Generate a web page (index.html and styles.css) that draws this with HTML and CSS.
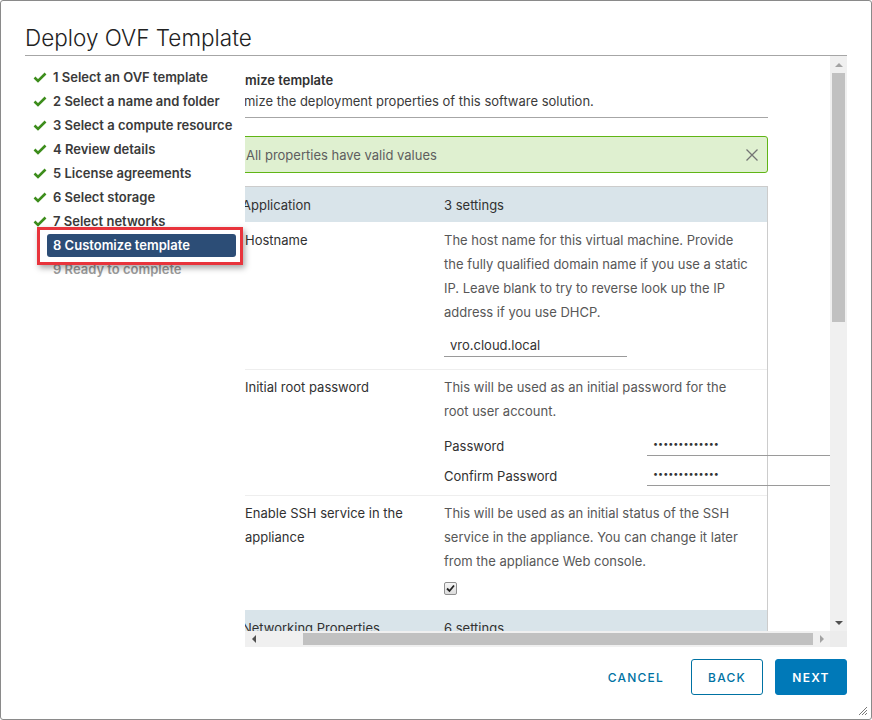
FILE: index.html
```html
<!DOCTYPE html>
<html lang="en">
<head>
    <meta charset="UTF-8">
    <title>Deploy OVF Template</title>
    <link rel="stylesheet" href="styles.css">
</head>
<body>
    <div class="dialog">
        <div class="dialog-header">
            <h1 class="dialog-title">Deploy OVF Template</h1>
        </div>

        <div class="dialog-body">
            <!-- wizard steps -->
            <nav class="steps">
                <div class="step"><svg class="check" viewBox="0 0 14 11"><path d="M1.5 5.5 L5 9 L12.5 1.5"/></svg><span class="step-link">1 Select an OVF template</span></div>
                <div class="step"><svg class="check" viewBox="0 0 14 11"><path d="M1.5 5.5 L5 9 L12.5 1.5"/></svg><span class="step-link">2 Select a name and folder</span></div>
                <div class="step"><svg class="check" viewBox="0 0 14 11"><path d="M1.5 5.5 L5 9 L12.5 1.5"/></svg><span class="step-link">3 Select a compute resource</span></div>
                <div class="step"><svg class="check" viewBox="0 0 14 11"><path d="M1.5 5.5 L5 9 L12.5 1.5"/></svg><span class="step-link">4 Review details</span></div>
                <div class="step"><svg class="check" viewBox="0 0 14 11"><path d="M1.5 5.5 L5 9 L12.5 1.5"/></svg><span class="step-link">5 License agreements</span></div>
                <div class="step"><svg class="check" viewBox="0 0 14 11"><path d="M1.5 5.5 L5 9 L12.5 1.5"/></svg><span class="step-link">6 Select storage</span></div>
                <div class="step"><svg class="check" viewBox="0 0 14 11"><path d="M1.5 5.5 L5 9 L12.5 1.5"/></svg><span class="step-link">7 Select networks</span></div>
                <div class="step current"><span class="step-link">8 Customize template</span></div>
                <div class="step todo"><span class="step-link">9 Ready to complete</span></div>
                <div class="callout"></div>
            </nav>

            <div class="scroller">
                <div class="viewport">
                    <div class="page">
                        <div class="page-head">
                            <div class="page-title">Customize template</div>
                            <div class="page-sub">Customize the deployment properties of this software solution.</div>
                        </div>

                        <div class="alert">
                            <span class="alert-text">All properties have valid values</span>
                            <svg class="alert-close" viewBox="0 0 12 12"><path d="M0.5 0.5 L11.5 11.5 M11.5 0.5 L0.5 11.5"/></svg>
                        </div>

                        <div class="stack">
                            <div class="stack-head">
                                <div class="stack-label">Application</div>
                                <div>3 settings</div>
                            </div>

                            <div class="stack-row">
                                <div class="row-label">Hostname</div>
                                <div class="row-content">
                                    <div class="row-desc">The host name for this virtual machine. Provide the fully qualified domain name if you use a static IP. Leave blank to try to reverse look up the IP address if you use DHCP.</div>
                                    <input class="text-input host-input" type="text" value="vro.cloud.local">
                                </div>
                            </div>

                            <div class="stack-row pw-row">
                                <div class="row-label">Initial root password</div>
                                <div class="row-content">
                                    <div class="row-desc">This will be used as an initial password for the root user account.</div>
                                    <div class="field">
                                        <span class="field-label">Password</span>
                                        <input class="text-input pw-input" type="password" value="vmware123456!">
                                    </div>
                                    <div class="field">
                                        <span class="field-label">Confirm Password</span>
                                        <input class="text-input pw-input" type="password" value="vmware123456!">
                                    </div>
                                </div>
                            </div>

                            <div class="stack-row ssh-row">
                                <div class="row-label">Enable SSH service in the appliance</div>
                                <div class="row-content">
                                    <div class="row-desc">This will be used as an initial status of the SSH service in the appliance. You can change it later from the appliance Web console.</div>
                                    <span class="checkbox"><svg viewBox="0 0 11 11"><path d="M2 5.5 L4.5 8 L9 2.5"/></svg></span>
                                </div>
                            </div>

                            <div class="stack-head">
                                <div class="stack-label">Networking Properties</div>
                                <div>6 settings</div>
                            </div>
                        </div>
                    </div>
                </div>

                <div class="vbar">
                    <div class="sb-btn"><span class="tri tri-up"></span></div>
                    <div class="vthumb"></div>
                    <div class="sb-fill"></div>
                    <div class="sb-btn"><span class="tri tri-down"></span></div>
                </div>
                <div class="hbar">
                    <div class="sb-btn"><span class="tri tri-left"></span></div>
                    <div class="hgap"></div>
                    <div class="hthumb"></div>
                    <div class="sb-btn"><span class="tri tri-right"></span></div>
                </div>
                <div class="corner"></div>
            </div>
        </div>

        <div class="dialog-footer">
            <button class="btn btn-link">Cancel</button>
            <button class="btn btn-outline">Back</button>
            <button class="btn btn-primary">Next</button>
        </div>

        <svg class="grip" viewBox="0 0 10 10"><path d="M9 1 L1 9 M9 4 L4 9 M9 7 L7 9"/></svg>
    </div>
</body>
</html>
```

FILE: styles.css
```css
body {
    margin: 0;
    font-family: Inter, "Noto Sans", sans-serif;
    color: #313131;
    background-color: #fff;
}
.dialog {
    position: relative;
    width: 872px;
    height: 720px;
    box-sizing: border-box;
    border: 1px solid #8a8a8a;
    border-radius: 3px;
    display: flex;
    flex-direction: column;
    overflow: hidden;
    background-color: #fff;
}
.dialog-header {
    margin: 0 24px;
    height: 55px;
    box-sizing: border-box;
    padding-top: 26px;
    border-bottom: 1px solid #a6a6a6;
}
.dialog-title {
    margin: 0;
    font-size: 22.5px;
    font-weight: 300;
    line-height: 22px;
    color: #222;
}
.dialog-body {
    display: flex;
    height: 591px;
    padding-left: 24px;
}

/* steps */
.steps {
    position: relative;
    width: 220px;
    flex-shrink: 0;
    padding-top: 9px;
    box-sizing: border-box;
}
.step {
    display: flex;
    align-items: center;
    height: 24px;
    padding-left: 8px;
    font-size: 13px;
    font-weight: 600;
    color: #3a3a3a;
    white-space: nowrap;
}
.check {
    width: 14px;
    height: 11px;
    fill: none;
    stroke: #3d8d1c;
    stroke-width: 2.6;
}
.step-link {
    padding-left: 6px;
}
.step.current .step-link,
.step.todo .step-link {
    margin-left: 14px;
}
.step.current .step-link {
    width: 189px;
    height: 23px;
    line-height: 23px;
    box-sizing: border-box;
    border-radius: 3px;
    background-color: #2c4d76;
    color: #fff;
}
.step.todo {
    color: #9a9a9a;
}
.callout {
    position: absolute;
    left: 12px;
    top: 171px;
    width: 206px;
    height: 38px;
    box-sizing: border-box;
    border: 3px solid #e8343c;
    box-shadow: 2px 3px 6px rgba(0, 0, 0, 0.35);
}

/* scroll area */
.scroller {
    width: 602px;
    display: grid;
    grid-template-columns: 585px 17px;
    grid-template-rows: 575px 16px;
}
.viewport {
    overflow: hidden;
}
.page {
    margin-left: -47px;
    width: 632px;
    font-size: 13px;
}
.page-head {
    width: 570px;
    box-sizing: border-box;
    padding: 14px 0 6px 10px;
    border-bottom: 1px solid #a6a6a6;
}
.page-title {
    font-weight: 600;
    line-height: 20px;
}
.page-sub {
    margin-top: 1px;
    line-height: 20px;
    color: #3a3a3a;
}
.alert {
    width: 570px;
    height: 37px;
    margin-top: 18px;
    box-sizing: border-box;
    display: flex;
    align-items: center;
    justify-content: space-between;
    padding: 0 9px 0 47px;
    border: 1px solid #60b515;
    border-radius: 3px;
    background-color: #dff0d0;
    color: #5e5e5e;
}
.alert-close {
    width: 12px;
    height: 12px;
    fill: none;
    stroke: #747474;
    stroke-width: 1.3;
}
.stack {
    width: 570px;
    margin-top: 13px;
    box-sizing: border-box;
    border: 1px solid #ccc;
    border-bottom: none;
}
.stack-head {
    display: grid;
    grid-template-columns: 245px 1fr;
    align-items: center;
    height: 35px;
    background-color: #d9e4ea;
    color: #313131;
}
.stack-label {
    padding-left: 43px;
}
.stack-row {
    display: grid;
    grid-template-columns: 245px 1fr;
    padding: 6px 0 12px;
    border-bottom: 1px solid #eee;
    line-height: 24px;
}
.pw-row {
    padding-top: 5px;
    padding-bottom: 9px;
}
.ssh-row {
    padding-top: 5px;
    padding-bottom: 15px;
    border-bottom: none;
}
.row-label {
    padding: 0 20px 0 46px;
    color: #313131;
}
.row-desc {
    width: 306px;
    color: #575757;
}
.text-input {
    display: block;
    width: 183px;
    height: 24px;
    box-sizing: border-box;
    padding: 0 6px;
    border: none;
    border-bottom: 1px solid #9a9a9a;
    background: transparent;
    font-family: inherit;
    font-size: 13px;
    color: #333;
    outline: none;
}
.host-input {
    margin-top: 9px;
}
.field {
    display: flex;
    margin-top: 6px;
}
.row-desc + .field {
    margin-top: 9px;
}
.field-label {
    width: 203px;
    padding-top: 4px;
    line-height: 20px;
    color: #313131;
}
.pw-input {
    font-size: 9px;
    letter-spacing: 0;
}
.checkbox {
    display: block;
    width: 13px;
    height: 13px;
    margin-top: 9px;
    box-sizing: border-box;
    border: 1px solid #8f8f8f;
    border-radius: 2px;
    background: linear-gradient(#f5f5f5, #dcdcdc);
}
.checkbox svg {
    display: block;
    width: 11px;
    height: 11px;
    fill: none;
    stroke: #222;
    stroke-width: 1.8;
}

/* scrollbars */
.vbar,
.hbar {
    display: flex;
    background-color: #f0f0f0;
}
.vbar {
    flex-direction: column;
}
.sb-btn {
    flex: 0 0 17px;
    display: flex;
    align-items: center;
    justify-content: center;
}
.vthumb {
    height: 249px;
    margin: 0 2px;
    background-color: #c1c1c1;
}
.sb-fill {
    flex: 1;
}
.hgap {
    width: 41px;
}
.hthumb {
    width: 510px;
    margin: 2px 0;
    background-color: #c1c1c1;
}
.tri {
    width: 0;
    height: 0;
    border: 4px solid transparent;
}
.tri-up {
    border-top: none;
    border-bottom-color: #a3a3a3;
}
.tri-down {
    border-bottom: none;
    border-top-color: #505050;
}
.tri-left {
    border-left: none;
    border-right-color: #505050;
}
.tri-right {
    border-right: none;
    border-left-color: #a3a3a3;
}
.corner {
    background-color: #ececec;
}

/* footer */
.dialog-footer {
    flex: 1;
    display: flex;
    justify-content: flex-end;
    align-items: flex-start;
    padding: 12px 24px 0 0;
}
.btn {
    height: 36px;
    min-width: 72px;
    box-sizing: border-box;
    border-radius: 3px;
    font-family: inherit;
    font-size: 12px;
    font-weight: 500;
    letter-spacing: 0.1em;
    text-transform: uppercase;
    cursor: pointer;
}
.btn-link {
    min-width: 0;
    padding: 0 8px;
    margin-right: 19px;
    border: none;
    background: none;
    color: #0072a3;
}
.btn-outline {
    margin-right: 12px;
    border: 1px solid #0072a3;
    background-color: #fff;
    color: #0072a3;
}
.btn-primary {
    border: 1px solid #0079b8;
    background-color: #0079b8;
    color: #fff;
    font-weight: 600;
}
.grip {
    position: absolute;
    right: 3px;
    bottom: 3px;
    width: 10px;
    height: 10px;
    fill: none;
    stroke: #777;
    stroke-width: 1;
}
```
